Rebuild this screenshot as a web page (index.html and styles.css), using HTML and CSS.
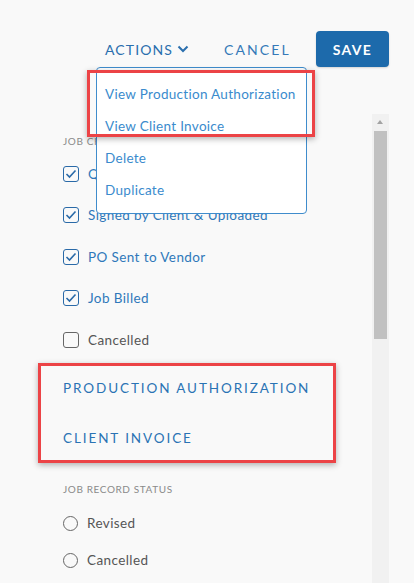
FILE: index.html
```html
<!DOCTYPE html>
<html>
<head>
    <title>Job Record</title>
    <link rel="stylesheet" href="styles.css">
</head>
<body>
    <div class="toolbar">
        <button class="btn-link actions" type="button">ACTIONS
            <svg class="chev" width="12" height="8" viewBox="0 0 12 8"><path d="M1.5 1.5 L6 6 L10.5 1.5" fill="none" stroke="#2a6fae" stroke-width="2"/></svg>
        </button>
        <button class="btn-link cancel" type="button">CANCEL</button>
        <button class="btn-save" type="button">SAVE</button>

        <ul class="menu">
            <li>View Production Authorization</li>
            <li>View Client Invoice</li>
            <li>Delete</li>
            <li>Duplicate</li>
        </ul>
        <div class="mark mark-menu"></div>
    </div>

    <div class="panel">
        <div class="content">
            <div class="section-title">JOB CHECKLIST</div>
            <label class="check on"><span class="box"><svg width="12" height="10" viewBox="0 0 12 10"><path d="M1.5 5 L4.5 8 L10.5 1.5" fill="none" stroke="#2a6aa8" stroke-width="1.6"/></svg></span>Quote Approved</label>
            <label class="check on"><span class="box"><svg width="12" height="10" viewBox="0 0 12 10"><path d="M1.5 5 L4.5 8 L10.5 1.5" fill="none" stroke="#2a6aa8" stroke-width="1.6"/></svg></span>Signed by Client &amp; Uploaded</label>
            <label class="check on"><span class="box"><svg width="12" height="10" viewBox="0 0 12 10"><path d="M1.5 5 L4.5 8 L10.5 1.5" fill="none" stroke="#2a6aa8" stroke-width="1.6"/></svg></span>PO Sent to Vendor</label>
            <label class="check on"><span class="box"><svg width="12" height="10" viewBox="0 0 12 10"><path d="M1.5 5 L4.5 8 L10.5 1.5" fill="none" stroke="#2a6aa8" stroke-width="1.6"/></svg></span>Job Billed</label>
            <label class="check"><span class="box"></span>Cancelled</label>

            <div class="docs">
                <a class="doc-link">PRODUCTION AUTHORIZATION</a>
                <a class="doc-link">CLIENT INVOICE</a>
                <div class="mark mark-docs"></div>
            </div>

            <div class="section-title status-title">JOB RECORD STATUS</div>
            <label class="radio"><span class="dot"></span>Revised</label>
            <label class="radio"><span class="dot"></span>Cancelled</label>
        </div>
        <div class="scrollbar">
            <div class="sb-arrow"></div>
            <div class="sb-thumb"></div>
        </div>
    </div>
</body>
</html>
```

FILE: styles.css
```css
body {
    font-family: Lato, "Open Sans", sans-serif;
    background: #f9f9f9;
    margin: 0;
    padding: 0;
    height: 583px;
    overflow: hidden;
}
.toolbar {
    position: relative;
    display: flex;
    align-items: center;
    height: 36px;
    padding: 31px 25px 0 105px;
    box-sizing: content-box;
}
.btn-link {
    background: none;
    border: none;
    padding: 0;
    font-family: inherit;
    font-size: 14px;
    cursor: pointer;
}
.actions {
    color: #2a6fae;
    display: flex;
    align-items: center;
    gap: 4px;
    letter-spacing: 1.1px;
}
.chev {
    margin-top: -1px;
}
.cancel {
    margin-left: 35px;
    color: #3579b8;
    letter-spacing: 2.1px;
}
.btn-save {
    margin-left: auto;
    width: 73px;
    height: 36px;
    background: #1d6aab;
    color: #fff;
    border: none;
    border-radius: 4px;
    font-family: inherit;
    font-weight: bold;
    font-size: 14px;
    letter-spacing: 1.3px;
    box-shadow: 0 1px 2px rgba(0,0,0,0.15);
}
.menu {
    position: absolute;
    left: 96px;
    top: 67px;
    width: 209px;
    margin: 0;
    padding: 10px 0 7px 0;
    list-style: none;
    background: #fff;
    border: 1px solid #3f8ccc;
    border-radius: 4px;
    z-index: 2;
}
.menu li {
    height: 32px;
    line-height: 32px;
    padding-left: 8px;
    font-size: 13.5px;
    letter-spacing: 0.3px;
    color: #3a8bcd;
}
.mark {
    position: absolute;
    border: 3px solid #ec4346;
    box-shadow: 0 2px 6px rgba(0,0,0,0.3);
    z-index: 3;
}
.mark-menu {
    left: 87px;
    top: 70px;
    width: 222px;
    height: 61px;
}
.panel {
    display: flex;
    height: 469px;
    padding-right: 25px;
    margin-top: 47px;
}
.content {
    flex: 1;
    padding: 17px 0 0 63px;
}
.section-title {
    height: 20px;
    line-height: 20px;
    font-size: 10px;
    letter-spacing: 0.6px;
    color: #8a8a8a;
    margin-bottom: 2px;
}
.check, .radio {
    display: flex;
    align-items: center;
    height: 41.5px;
    font-size: 13.5px;
    letter-spacing: 0.4px;
    color: #2f78ba;
}
.check .box {
    width: 14px;
    height: 14px;
    border: 1.5px solid #2a6aa8;
    border-radius: 3px;
    margin-right: 9px;
    display: flex;
    align-items: center;
    justify-content: center;
    flex-shrink: 0;
}
.check:not(.on) {
    color: #555;
}
.check:not(.on) .box {
    border-color: #666;
}
.docs {
    position: relative;
    margin-top: 2.5px;
}
.doc-link {
    display: block;
    height: 50px;
    line-height: 50px;
    font-size: 13.5px;
    letter-spacing: 1.9px;
    color: #2a73b4;
}
.mark-docs {
    left: -25px;
    top: 0;
    width: 292px;
    height: 94px;
}
.status-title {
    margin-top: 16px;
    margin-bottom: 5.5px;
}
.radio {
    height: 37px;
    color: #555;
}
.radio .dot {
    width: 13px;
    height: 13px;
    border: 1.5px solid #666;
    border-radius: 50%;
    margin-right: 9px;
}
.scrollbar {
    width: 17px;
    background: #f1f1f1;
}
.sb-arrow {
    height: 17px;
    position: relative;
}
.sb-arrow::after {
    content: "";
    position: absolute;
    left: 5px;
    top: 6px;
    border-left: 3.5px solid transparent;
    border-right: 3.5px solid transparent;
    border-bottom: 4px solid #a3a3a3;
}
.sb-thumb {
    margin: 0 2px;
    height: 208px;
    background: #c1c1c1;
}
```
